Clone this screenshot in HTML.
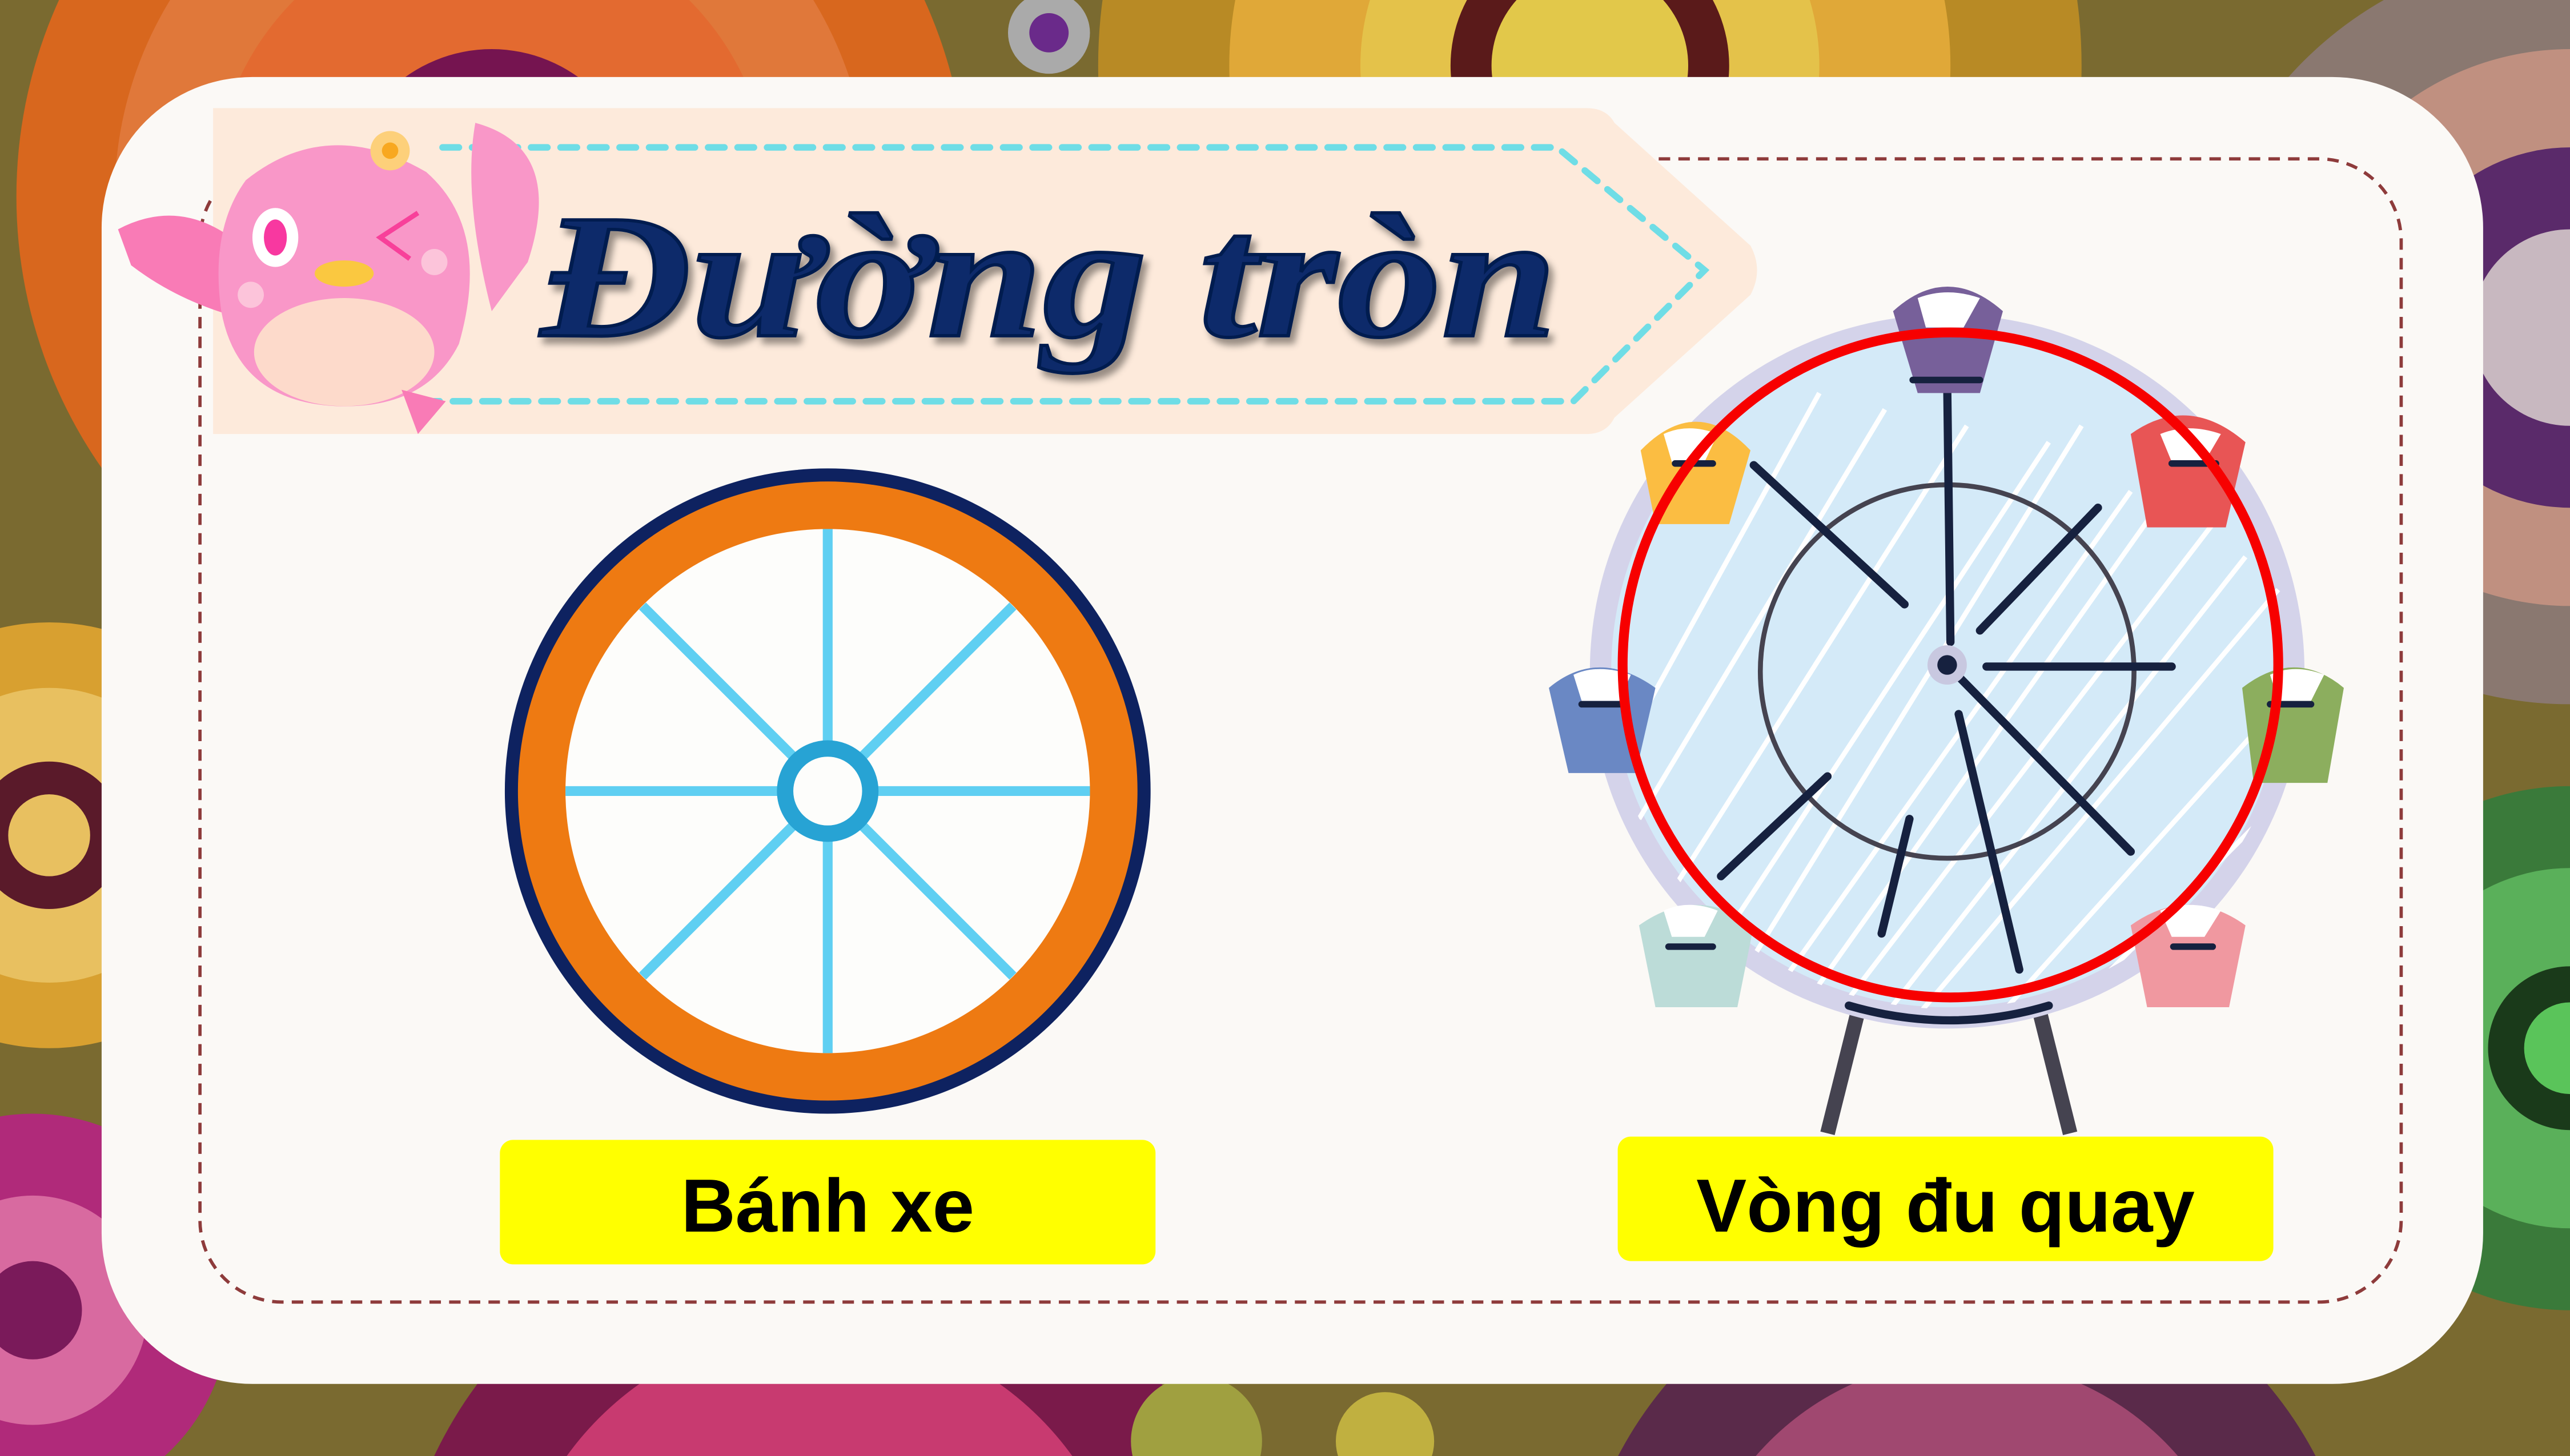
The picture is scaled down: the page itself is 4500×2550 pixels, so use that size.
<!DOCTYPE html>
<html><head><meta charset="utf-8"><style>
html,body{margin:0;padding:0;width:4500px;height:2550px;overflow:hidden;background:#6a5a2a;position:relative}
svg{display:block;position:absolute;left:0;top:0}
</style></head><body>
<svg width="4500" height="2550" viewBox="0 0 1568 889" preserveAspectRatio="none" xmlns="http://www.w3.org/2000/svg">
<defs>
<filter id="sh" x="-10%" y="-10%" width="130%" height="130%"><feDropShadow dx="3" dy="4" stdDeviation="2" flood-color="#000" flood-opacity="0.4"/></filter>
<clipPath id="wc"><circle cx="1188" cy="406" r="210"/></clipPath>
</defs>
<rect width="1568" height="889" fill="#7a6a30"/>
<g>
<circle cx="300" cy="120" r="290" fill="#d8671e"/><circle cx="300" cy="120" r="230" fill="#e0783a"/><circle cx="300" cy="120" r="170" fill="#e36a30"/><circle cx="300" cy="120" r="90" fill="#751450"/>
<circle cx="970" cy="40" r="300" fill="#b88a25"/><circle cx="970" cy="40" r="220" fill="#e0a838"/><circle cx="970" cy="40" r="140" fill="#e4c24a"/><circle cx="970" cy="40" r="85" fill="#5a1a1a"/><circle cx="970" cy="40" r="60" fill="#e2c84a"/>
<circle cx="1568" cy="200" r="230" fill="#8a7870"/><circle cx="1568" cy="200" r="170" fill="#c09080"/><circle cx="1568" cy="200" r="110" fill="#5a2a6a"/><circle cx="1568" cy="200" r="60" fill="#c8b8c0"/>
<circle cx="1568" cy="640" r="160" fill="#3a7a3a"/><circle cx="1568" cy="640" r="110" fill="#5ab05a"/><circle cx="1568" cy="640" r="50" fill="#1a3a1a"/><circle cx="1568" cy="640" r="28" fill="#5ac45a"/>
<circle cx="30" cy="510" r="130" fill="#d8a030"/><circle cx="30" cy="510" r="90" fill="#e8c060"/><circle cx="30" cy="510" r="45" fill="#5a1a2a"/><circle cx="30" cy="510" r="25" fill="#e8c060"/>
<circle cx="20" cy="800" r="120" fill="#b02a7a"/><circle cx="20" cy="800" r="70" fill="#d86aa0"/><circle cx="20" cy="800" r="30" fill="#7a1a5a"/>
<circle cx="500" cy="1000" r="260" fill="#7a1a4a"/><circle cx="500" cy="1000" r="190" fill="#c83a70"/>
<circle cx="1200" cy="1000" r="240" fill="#5a2a4a"/><circle cx="1200" cy="1000" r="170" fill="#a04870"/>
<circle cx="640" cy="20" r="25" fill="#aaa"/><circle cx="640" cy="20" r="12" fill="#6a2a8a"/>
<circle cx="730" cy="880" r="40" fill="#a0a040"/><circle cx="845" cy="880" r="30" fill="#c0b040"/>
</g>
<rect x="62" y="47" width="1453" height="798" rx="92" fill="#fbf9f6"/>
<rect x="122" y="97" width="1343" height="698" rx="50" fill="none" stroke="#8e3b3b" stroke-width="2" stroke-dasharray="7 5"/>
<path d="M130 66 H968 Q980 66 985 75 L1068 150 Q1076 165 1068 180 L985 255 Q980 265 968 265 H130 Z" fill="#fdeadb"/>
<path d="M270 90 H950 L1040 165 L960 245 H250" fill="none" stroke="#6fdde6" stroke-width="4" stroke-dasharray="10 8" stroke-linecap="round"/>
<g>
<path d="M72 140 Q110 120 145 148 L150 195 Q110 185 80 162 Z" fill="#f97bb6"/>
<path d="M290 75 Q345 90 322 160 L300 190 Q282 120 290 75Z" fill="#f997c8"/>
<path d="M150 110 Q200 70 260 105 Q300 140 280 210 Q260 250 205 248 Q145 245 135 190 Q128 140 150 110Z" fill="#f997c8"/>
<ellipse cx="210" cy="215" rx="55" ry="33" fill="#fddacb"/>
<circle cx="238" cy="92" r="12" fill="#fdd07a"/><circle cx="238" cy="92" r="5" fill="#f8a820"/>
<ellipse cx="168" cy="145" rx="14" ry="18" fill="#fff"/><ellipse cx="168" cy="145" rx="7" ry="11" fill="#f838a0"/>
<path d="M255 130 L232 145 L250 158" fill="none" stroke="#f8409a" stroke-width="3"/>
<ellipse cx="210" cy="167" rx="18" ry="8" fill="#fac840"/>
<circle cx="153" cy="180" r="8" fill="#fcc4da"/><circle cx="265" cy="160" r="8" fill="#fcc4da"/>
<path d="M245 238 L272 245 L255 265 Z" fill="#f97bb6"/>
</g>
<text x="330" y="205" textLength="620" lengthAdjust="spacingAndGlyphs" font-family="Liberation Serif, serif" font-style="italic" font-weight="bold" font-size="108" fill="#0b2a6a" stroke="#061d4f" stroke-width="2" filter="url(#sh)">Đường tròn</text>
<circle cx="505" cy="483" r="197" fill="#0e2260"/>
<circle cx="505" cy="483" r="189" fill="#ee7a12"/>
<circle cx="505" cy="483" r="160" fill="#fdfdfb"/>
<g stroke="#5fcff2" stroke-width="6">
<line x1="505" y1="323" x2="505" y2="643"/><line x1="345" y1="483" x2="665" y2="483"/>
<line x1="392" y1="370" x2="618" y2="596"/><line x1="618" y1="370" x2="392" y2="596"/>
</g>
<circle cx="505" cy="483" r="26" fill="#fdfdfb" stroke="#27a3d4" stroke-width="10"/>
<line x1="1135" y1="612" x2="1115" y2="692" stroke="#454350" stroke-width="9"/>
<line x1="1243" y1="612" x2="1263" y2="692" stroke="#454350" stroke-width="9"/>
<circle cx="1188" cy="410" r="218" fill="#d4d3ea"/>
<circle cx="1188" cy="410" r="205" fill="#d4eaf8"/>
<g clip-path="url(#wc)" stroke="#fff" stroke-width="3">
<path d="M1000 500 L1150 250 M1010 560 L1200 260 M1040 590 L1250 270 M1080 610 L1300 300 M1120 620 L1350 320 M1170 620 L1390 360 M1220 620 L1400 420 M1000 440 L1110 240 M1270 610 L1400 480 M1060 600 L1270 260 M1100 615 L1330 290 M1150 620 L1370 340"/>
</g>
<circle cx="1188" cy="410" r="114" fill="none" stroke="#454350" stroke-width="3"/>
<g stroke="#16213f" stroke-width="5" stroke-linecap="round">
<line x1="1188" y1="232" x2="1190" y2="392"/><line x1="1070" y1="284" x2="1162" y2="369"/>
<line x1="1280" y1="310" x2="1208" y2="385"/><line x1="1212" y1="407" x2="1325" y2="407"/>
<line x1="1190" y1="408" x2="1300" y2="520"/><line x1="1195" y1="436" x2="1232" y2="592"/>
<line x1="1165" y1="500" x2="1148" y2="570"/><line x1="1115" y1="474" x2="1050" y2="535"/>
<path d="M1128 614 Q1190 632 1250 614" fill="none"/>
</g>
<circle cx="1188" cy="406" r="12" fill="#c8c8e0"/><circle cx="1188" cy="406" r="6" fill="#16213f"/>
<g stroke="#16213f" stroke-width="4" stroke-linecap="round" fill="none">
<path d="M1167 232 H1208"/><path d="M1020 285 H1045"/><path d="M1330 285 H1352"/><path d="M965 435 H985"/><path d="M1388 435 H1410"/><path d="M1018 578 H1045"/><path d="M1326 578 H1350"/>
</g>
<g>
<path d="M1155 190 Q1188 160 1222 190 L1208 240 H1170 Z" fill="#77609a"/>
<path d="M1001 275 Q1035 240 1068 275 L1055 320 H1010 Z" fill="#fbbd42"/>
<path d="M1300 265 Q1335 240 1370 270 L1358 322 H1310 Z" fill="#e85555"/>
<path d="M945 420 Q975 395 1010 420 L998 472 H957 Z" fill="#6a88c4"/>
<path d="M1368 420 Q1400 395 1430 420 L1420 478 H1375 Z" fill="#8cae5e"/>
<path d="M1000 565 Q1035 540 1070 565 L1060 615 H1010 Z" fill="#bcdcd8"/>
<path d="M1300 565 Q1335 540 1370 565 L1360 615 H1310 Z" fill="#f098a0"/>
<g fill="#fff"><path d="M1170 182 Q1188 175 1208 182 L1198 200 H1175 Z"/><path d="M1015 265 Q1030 258 1048 265 L1040 282 H1020Z"/><path d="M1318 265 Q1335 258 1355 265 L1345 282 H1325Z"/><path d="M960 412 Q975 405 995 412 L988 428 H965Z"/><path d="M1385 412 Q1400 405 1418 412 L1410 428 H1390Z"/><path d="M1015 556 Q1030 549 1048 556 L1040 572 H1020Z"/><path d="M1318 556 Q1335 549 1355 556 L1345 572 H1325Z"/></g>
</g>
<g stroke="#16213f" stroke-width="4" stroke-linecap="round" fill="none">
<path d="M1167 232 H1208"/><path d="M1022 283 H1045"/><path d="M1325 283 H1352"/><path d="M965 430 H990"/><path d="M1385 430 H1410"/><path d="M1018 578 H1045"/><path d="M1326 578 H1350"/>
</g>
<ellipse cx="1190" cy="406" rx="200" ry="203" fill="none" stroke="#f70000" stroke-width="6"/>
<rect x="305" y="696" width="400" height="76" rx="8" fill="#ffff00"/>
<text x="505" y="752" text-anchor="middle" font-family="Liberation Sans, sans-serif" font-weight="bold" font-size="46" fill="#000">Bánh xe</text>
<rect x="987" y="694" width="400" height="76" rx="8" fill="#ffff00"/>
<text x="1187" y="752" text-anchor="middle" font-family="Liberation Sans, sans-serif" font-weight="bold" font-size="46" fill="#000">Vòng đu quay</text>
</svg>
</body></html>
